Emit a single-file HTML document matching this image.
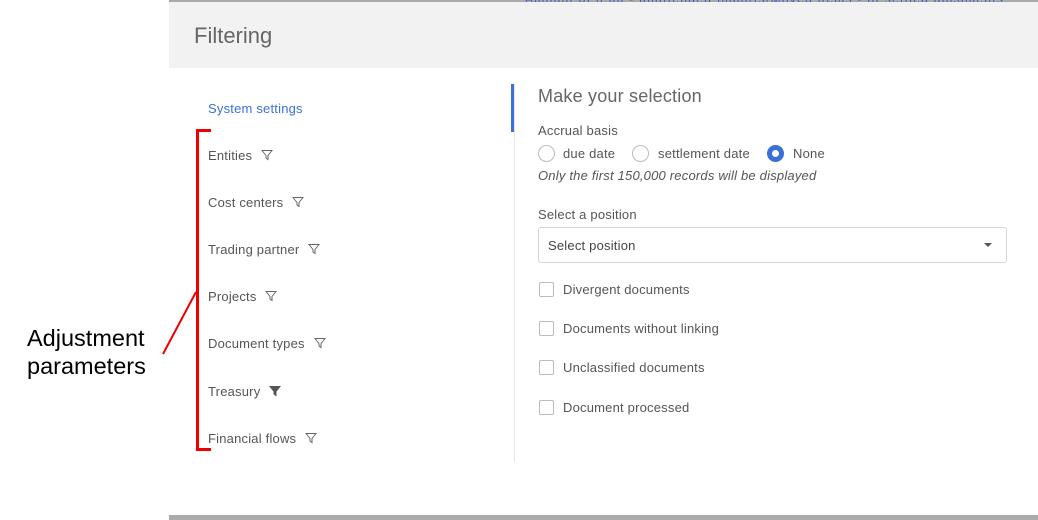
<!DOCTYPE html>
<html><head><style>
body{margin:0;width:1038px;height:520px;background:#fff;position:relative;overflow:hidden;font-family:"Liberation Sans",sans-serif;}
.a{position:absolute;white-space:nowrap}
.nav{font-size:13px;color:#555;letter-spacing:0.2px}
.cb{position:absolute;width:13px;height:13px;border:1px solid #bbb;border-radius:2px;background:#fff}
.rd{position:absolute;width:15px;height:15px;border:1px solid #bbb;border-radius:50%}
.t{font-size:13px;color:#555;letter-spacing:0.2px}
</style></head><body>
<div class="a" style="left:169px;top:0;width:869px;height:2px;background:#aaa"></div>
<div class="a" style="left:525px;top:-8px;font-size:12px;color:#3a5fc8;letter-spacing:1.3px">Amount of 0.00 - unattended Imports/Moved items - of settled documents</div>
<div class="a" style="left:169px;top:2px;width:869px;height:66px;background:#f2f2f2"></div>
<div class="a" style="left:194px;top:23px;font-size:22px;color:#666">Filtering</div>
<div class="a" style="left:169px;top:515px;width:869px;height:5px;background:#aaa"></div>

<div class="a" style="left:208px;top:101px;font-size:13px;color:#3d6fd9;letter-spacing:0.2px">System settings</div>
<div class="a nav" style="left:208px;top:148px">Entities <svg width="12" height="12" viewBox="0 0 12 12" style="margin-left:5px;vertical-align:-1px"><path d="M1 1.5h10L7 6.5v4l-2-1.5V6.5z" fill="none" stroke="#666" stroke-width="1"/></svg></div>
<div class="a nav" style="left:208px;top:195px">Cost centers <svg width="12" height="12" viewBox="0 0 12 12" style="margin-left:5px;vertical-align:-1px"><path d="M1 1.5h10L7 6.5v4l-2-1.5V6.5z" fill="none" stroke="#666"/></svg></div>
<div class="a nav" style="left:208px;top:242px">Trading partner <svg width="12" height="12" viewBox="0 0 12 12" style="margin-left:5px;vertical-align:-1px"><path d="M1 1.5h10L7 6.5v4l-2-1.5V6.5z" fill="none" stroke="#666"/></svg></div>
<div class="a nav" style="left:208px;top:289px">Projects <svg width="12" height="12" viewBox="0 0 12 12" style="margin-left:5px;vertical-align:-1px"><path d="M1 1.5h10L7 6.5v4l-2-1.5V6.5z" fill="none" stroke="#666"/></svg></div>
<div class="a nav" style="left:208px;top:336px">Document types <svg width="12" height="12" viewBox="0 0 12 12" style="margin-left:5px;vertical-align:-1px"><path d="M1 1.5h10L7 6.5v4l-2-1.5V6.5z" fill="none" stroke="#666"/></svg></div>
<div class="a nav" style="left:208px;top:384px">Treasury <svg width="12" height="12" viewBox="0 0 12 12" style="margin-left:5px;vertical-align:-1px"><path d="M1 1.5h10L7 6.5v4l-2-1.5V6.5z" fill="#555" stroke="#555"/></svg></div>
<div class="a nav" style="left:208px;top:431px">Financial flows <svg width="12" height="12" viewBox="0 0 12 12" style="margin-left:5px;vertical-align:-1px"><path d="M1 1.5h10L7 6.5v4l-2-1.5V6.5z" fill="none" stroke="#666"/></svg></div>

<div class="a" style="left:196px;top:129px;width:3px;height:322px;background:#e00"></div>
<div class="a" style="left:196px;top:129px;width:15px;height:3px;background:#e00"></div>
<div class="a" style="left:196px;top:448px;width:15px;height:3px;background:#e00"></div>
<svg class="a" style="left:160px;top:290px" width="40" height="70"><line x1="36" y1="2" x2="3" y2="64" stroke="#e00" stroke-width="2"/></svg>
<div class="a" style="left:27px;top:324px;font-size:23.5px;color:#000;line-height:28px">Adjustment<br>parameters</div>

<div class="a" style="left:514px;top:84px;width:1px;height:378px;background:#e6e6e6"></div>
<div class="a" style="left:511px;top:84px;width:3px;height:48px;background:#3d6fd9"></div>

<div class="a" style="left:538px;top:86px;font-size:18px;color:#666;letter-spacing:0.2px">Make your selection</div>
<div class="a t" style="left:538px;top:123px">Accrual basis</div>
<div class="rd" style="left:538px;top:145px"></div>
<div class="a t" style="left:563px;top:146px">due date</div>
<div class="rd" style="left:632px;top:145px"></div>
<div class="a t" style="left:658px;top:146px">settlement date</div>
<div class="rd" style="left:767px;top:145px;border:5px solid #3d6fd9;width:7px;height:7px;background:#fff"></div>
<div class="a t" style="left:793px;top:146px">None</div>
<div class="a t" style="left:538px;top:168px;font-style:italic">Only the first 150,000 records will be displayed</div>
<div class="a t" style="left:538px;top:207px">Select a position</div>
<div class="a" style="left:538px;top:227px;width:467px;height:34px;border:1px solid #d6d6d6;border-radius:3px"></div>
<div class="a t" style="left:548px;top:238px;color:#444">Select position</div>
<div class="a" style="left:984px;top:243px;width:0;height:0;border-left:4px solid transparent;border-right:4px solid transparent;border-top:4px solid #555"></div>

<div class="cb" style="left:539px;top:282px"></div><div class="a t" style="left:563px;top:282px">Divergent documents</div>
<div class="cb" style="left:539px;top:321px"></div><div class="a t" style="left:563px;top:321px">Documents without linking</div>
<div class="cb" style="left:539px;top:360px"></div><div class="a t" style="left:563px;top:360px">Unclassified documents</div>
<div class="cb" style="left:539px;top:400px"></div><div class="a t" style="left:563px;top:400px">Document processed</div>
</body></html>
